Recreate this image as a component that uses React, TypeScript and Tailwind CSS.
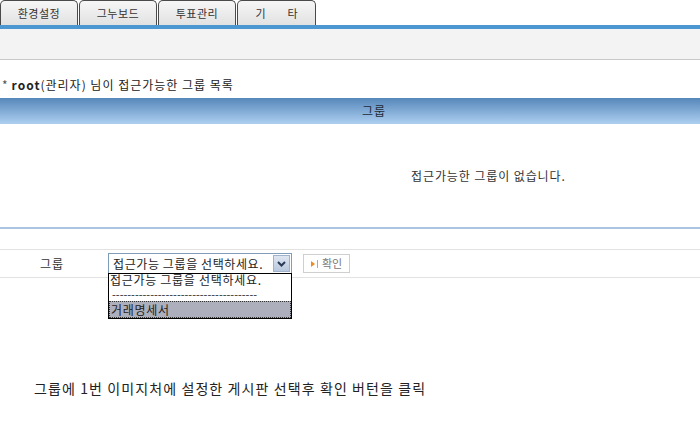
import React from "react";

const font = { fontFamily: '"Noto Sans CJK KR", "Noto Sans", sans-serif' };

function Tab({ label }: { label: string }) {
  return (
    <div className="w-[78px] h-[25px] mr-[1px] border border-b-0 border-[#4a4a4a] rounded-t-[5px] bg-gradient-to-b from-[#f6f6f6] to-[#e2e2e2] flex items-center justify-center text-[11px] tracking-[0.5px] text-[#333] leading-none">
      {label}
    </div>
  );
}

export default function App() {
  return (
    <div className="relative w-[700px] h-[427px] overflow-hidden bg-white text-[#222]" style={font}>
      <div className="flex h-[25px] items-end">
        <Tab label="환경설정" />
        <Tab label="그누보드" />
        <Tab label="투표관리" />
        <div className="w-[79px] h-[25px] border border-b-0 border-[#4a4a4a] rounded-t-[5px] bg-gradient-to-b from-[#f6f6f6] to-[#e2e2e2] flex items-center justify-center gap-[22px] text-[11px] text-[#333] leading-none">
          <span>기</span>
          <span>타</span>
        </div>
      </div>
      <div className="h-[4px] bg-[#4a97d2]" />
      <div className="h-[31px] bg-[#f3f3f3] border-b border-[#c8c8c8]" />
      <div className="h-[38px] flex items-end pl-[2px] pb-[7px] text-[12px] tracking-[1px] leading-none text-[#222]">
        <span className="text-[#555] mr-[3px]">*</span>
        <b className="font-bold">root</b>
        <span>(관리자) 님이 접근가능한 그룹 목록</span>
      </div>
      <div className="h-[26px] bg-gradient-to-b from-[#5687ba] to-[#aed0f1] flex items-center pl-[362px] text-[12px] tracking-[1px] text-[#1e2a38] leading-none">
        그룹
      </div>
      <div className="h-[103px] flex items-center pl-[411px] text-[12px] tracking-[0.9px] text-[#333] leading-none">
        접근가능한 그룹이 없습니다.
      </div>
      <div className="h-[2px] bg-[#a9c5e3]" />
      <div className="h-[20px]" />
      <div className="h-[29px] border-t border-b border-[#e2e2e2] flex items-center">
        <div className="w-[108px] pl-[40px] text-[12px] tracking-[1px] text-[#333] leading-none">그룹</div>
        <div className="w-[184px] h-[21px] border border-[#7f9db9] bg-white flex items-center">
          <span className="flex-1 pl-[4px] text-[12px] tracking-[0.6px] text-[#222] leading-none whitespace-nowrap">접근가능 그룹을 선택하세요.</span>
          <div className="w-[17px] h-[17px] mr-[1px] bg-gradient-to-b from-[#dfe6f1] to-[#b9c8de] border border-[#9fb2cd] flex items-center justify-center">
            <svg width="9" height="6" viewBox="0 0 9 6">
              <path d="M1 1 L4.5 4.5 L8 1" fill="none" stroke="#2b3a55" strokeWidth="2" />
            </svg>
          </div>
        </div>
        <div className="ml-[11px] w-[47px] h-[19px] border border-[#cfcfcf] bg-white flex items-center justify-center gap-[4px] text-[11px] text-[#777] leading-none">
          <span className="flex items-center gap-[2px]">
            <svg width="4" height="6" viewBox="0 0 4 6"><path d="M0 0 L4 3 L0 6 Z" fill="#f08a20" /></svg>
            <span className="w-[1px] h-[8px] bg-[#aaa]" />
          </span>
          <span>확인</span>
        </div>
      </div>
      <div className="absolute left-[108px] top-[273px] w-[184px] h-[46px] border border-black bg-white text-[12px] tracking-[0.7px] text-[#222] flex flex-col">
        <div className="pl-[1px] h-[14px] leading-[12px] whitespace-nowrap">접근가능 그룹을 선택하세요.</div>
        <div className="pl-[3px] h-[13px] text-[11px] leading-[13px] whitespace-nowrap tracking-[0px]">--------------------------------------</div>
        <div className="h-[17px] bg-[#adafbd] border border-dotted border-[#333] pl-[1px] flex items-center whitespace-nowrap leading-none">거래명세서</div>
      </div>
      <div className="absolute left-[34px] top-[381px] text-[14px] tracking-[1.1px] leading-none text-[#222] whitespace-nowrap">
        그룹에 1번 이미지처에 설정한 게시판 선택후 확인 버턴을 클릭
      </div>
    </div>
  );
}
